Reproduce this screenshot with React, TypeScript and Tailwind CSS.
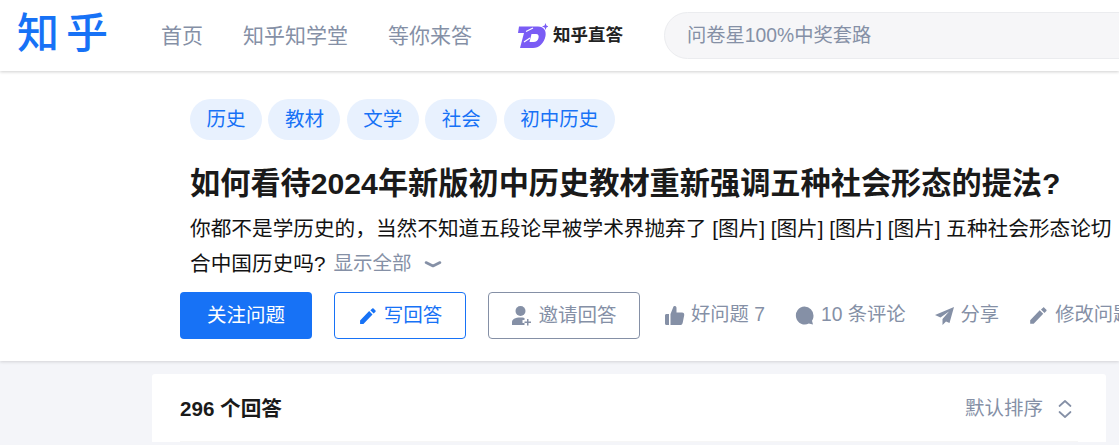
import React from "react";

function Tag({ children }: { children: React.ReactNode }) {
  return (
    <span className="flex h-[41px] shrink-0 items-center rounded-full bg-[#e8f1fe] px-[16.500px] text-[19.500px] text-[#1772f6]">
      {children}
    </span>
  );
}

function Action({ icon, children, className }: { icon: React.ReactNode; children: React.ReactNode; className: string }) {
  return (
    <span className={`flex shrink-0 items-center gap-[6px] text-[19.300px] text-[#8590a6] ${className}`}>
      {icon}
      <span>{children}</span>
    </span>
  );
}

const Pencil = ({ size, color }: { size: number; color: string }) => (
  <svg width={size} height={size} viewBox="0 0 24 24" fill={color}>
    <path d="M2.500 17.500V21.500H6.500L17.400 10.100l-4-4L2.500 17.500zM21 6.800c.4-.4.4-1 0-1.400l-2.400-2.400c-.4-.4-1-.4-1.400 0l-2.400 2 4 4L21 6.800z" />
  </svg>
);

export default function App() {
  return (
    <div className="h-[445px] w-[1119px] overflow-hidden bg-[#f4f5f9] font-['Liberation_Sans','Noto_Sans_CJK_SC',sans-serif]">
      <header className="relative z-10 flex h-[71px] items-center bg-white pl-[17px] shadow-[0_1px_3px_rgba(18,18,18,0.2)]">
        <span className="w-[144px] shrink-0 pb-[3px] text-[42px] leading-none font-medium tracking-[7px] text-[#1772f6]">知乎</span>
        <nav className="flex shrink-0 items-center gap-[40px] text-[21px] text-[#8590a6]">
          <span>首页</span>
          <span>知乎知学堂</span>
          <span>等你来答</span>
        </nav>
        <span className="ml-[46px] flex w-[146px] shrink-0 items-center gap-[5px]">
          <svg width="30" height="26" viewBox="0 0 30 26">
            <path fillRule="evenodd" d="M1 3.500H20C26 3.500 28.500 8 27.500 13C26 20.500 21 25 15 25H2L6 10H0ZM13.500 11H18C20.500 11 21 13 20.500 15C20 17.500 18 19 15.500 19H11.500Z" fill="#7a5cf5" />
            <path d="M8 8.500L15 5M6 19L12 15" stroke="#fff" strokeWidth="1.200" />
            <path d="M27.500 0l.9 2.600 2.600.9-2.600.9-.9 2.600-.9-2.600-2.600-.9 2.600-.9z" fill="#7a5cf5" />
          </svg>
          <span className="text-[17.500px] font-bold text-[#222]">知乎直答</span>
        </span>
        <div className="flex h-[47px] w-[600px] shrink-0 items-center rounded-full border border-[#ebecef] bg-[#f6f6f8] pl-[22px] text-[19.300px] text-[#8590a6]">
          <span className="pt-[1px]">问卷星100%中奖套路</span>
        </div>
      </header>

      <section className="relative flex h-[290px] flex-col bg-white pt-[28px] pl-[190px] shadow-[0_1px_3px_rgba(18,18,18,0.15)]">
        <div className="flex gap-[6.400px]">
          <Tag>历史</Tag>
          <Tag>教材</Tag>
          <Tag>文学</Tag>
          <Tag>社会</Tag>
          <Tag>初中历史</Tag>
        </div>
        <h1 className="mt-[24px] text-[30.200px] leading-[40px] font-bold whitespace-nowrap text-[#1a1a1a]">
          如何看待2024年新版初中历史教材重新强调五种社会形态的提法?
        </h1>
        <div className="mt-[7px] w-[925px] text-[20.670px] leading-[35px] text-[#121212]">
          <div className="whitespace-nowrap">你都不是学历史的，当然不知道五段论早被学术界抛弃了 [图片] [图片] [图片] [图片] 五种社会形态论切</div>
          <div className="flex items-center whitespace-nowrap">
            合中国历史吗?
            <span className="ml-[8px] text-[19.500px] text-[#8590a6]">显示全部</span>
            <svg className="ml-[12px]" width="20" height="18" viewBox="0 0 20 18" fill="none" stroke="#8590a6" strokeWidth="2.600" strokeLinecap="round" strokeLinejoin="round">
              <path d="M3 7.500l7 3.500 7-3.500" />
            </svg>
          </div>
        </div>
        <div className="mt-[11px] -ml-[10px] flex w-[939px] items-center overflow-hidden">
          <button className="flex h-[47px] w-[132px] shrink-0 items-center justify-center rounded-[4px] bg-[#1772f6] text-[19.500px] text-white">关注问题</button>
          <button className="ml-[22px] flex h-[47px] w-[132px] shrink-0 items-center justify-center gap-[6px] rounded-[4px] border border-[#1772f6] text-[19.500px] text-[#1772f6]">
            <Pencil size={20} color="#1772f6" />
            写回答
          </button>
          <button className="ml-[22px] flex h-[47px] w-[152px] shrink-0 items-center justify-center gap-[6px] rounded-[4px] border border-[#8590a6] text-[19.500px] text-[#8590a6]">
            <svg width="21" height="21" viewBox="0 0 21 21" fill="#8590a6">
              <circle cx="9.500" cy="6" r="5" />
              <path d="M1 20v-2.500C1 14 4 12.500 9.500 12.500c1.500 0 2.800.1 4 .4V15h-2v3h2v2z" />
              <path d="M16 14h1.500v2.500H20V18h-2.500v2.500H16V18h-2.500v-1.500H16z" />
            </svg>
            邀请回答
          </button>
          <Action
            className="ml-[24px]"
            icon={
              <svg width="21" height="21" viewBox="0 0 21 21" fill="#8590a6">
                <path d="M1 10.500c0-.8.600-1.500 1.500-1.500H5v11H2.500C1.600 20 1 19.300 1 18.500zM6.500 9l3-7.500c.3-.8 3-.8 3 1.500v4.500h5.500c1.700 0 2.500 1.300 2.200 2.700l-1.500 7.500c-.3 1.400-1.200 2.300-2.700 2.300H6.500z" />
              </svg>
            }
          >
            好问题 7
          </Action>
          <Action
            className="ml-[29px]"
            icon={
              <svg width="21" height="21" viewBox="0 0 21 21" fill="#8590a6">
                <path d="M10.500 1.500a9 9 0 0 1 9 9c0 2.400-.6 4-1.500 5.300l1 3.700-4.200-.9a9 9 0 1 1-4.300-17.100z" />
              </svg>
            }
          >
            10 条评论
          </Action>
          <Action
            className="ml-[28px]"
            icon={
              <svg width="21" height="21" viewBox="0 0 21 21" fill="#8590a6">
                <path d="M20 2L1 10l5.500 2.500L15 6.500 8.500 14v6l3.500-3.500 3.500 1.500z" />
              </svg>
            }
          >
            分享
          </Action>
          <Action className="ml-[29px]" icon={<Pencil size={21} color="#8590a6" />}>
            修改问题
          </Action>
        </div>
      </section>

      <main className="ml-[152px] mt-[13px] w-[954px] rounded-t-[3px] bg-white px-[28px]">
        <div className="flex h-[68px] items-center justify-between border-b border-[#f6f6f6] pt-[3px]">
          <span className="text-[20.600px] font-bold text-[#1a1a1a]">296 个回答</span>
          <span className="mr-[5px] flex items-center gap-[14px] text-[19.500px] text-[#8590a6]">
            默认排序
            <svg width="16" height="20" viewBox="0 0 16 20" fill="none" stroke="#8590a6" strokeWidth="1.700" strokeLinecap="round" strokeLinejoin="round">
              <path d="M2.500 7l5.500-5 5.500 5M2.500 13l5.500 5 5.500-5" />
            </svg>
          </span>
        </div>
      </main>
    </div>
  );
}
